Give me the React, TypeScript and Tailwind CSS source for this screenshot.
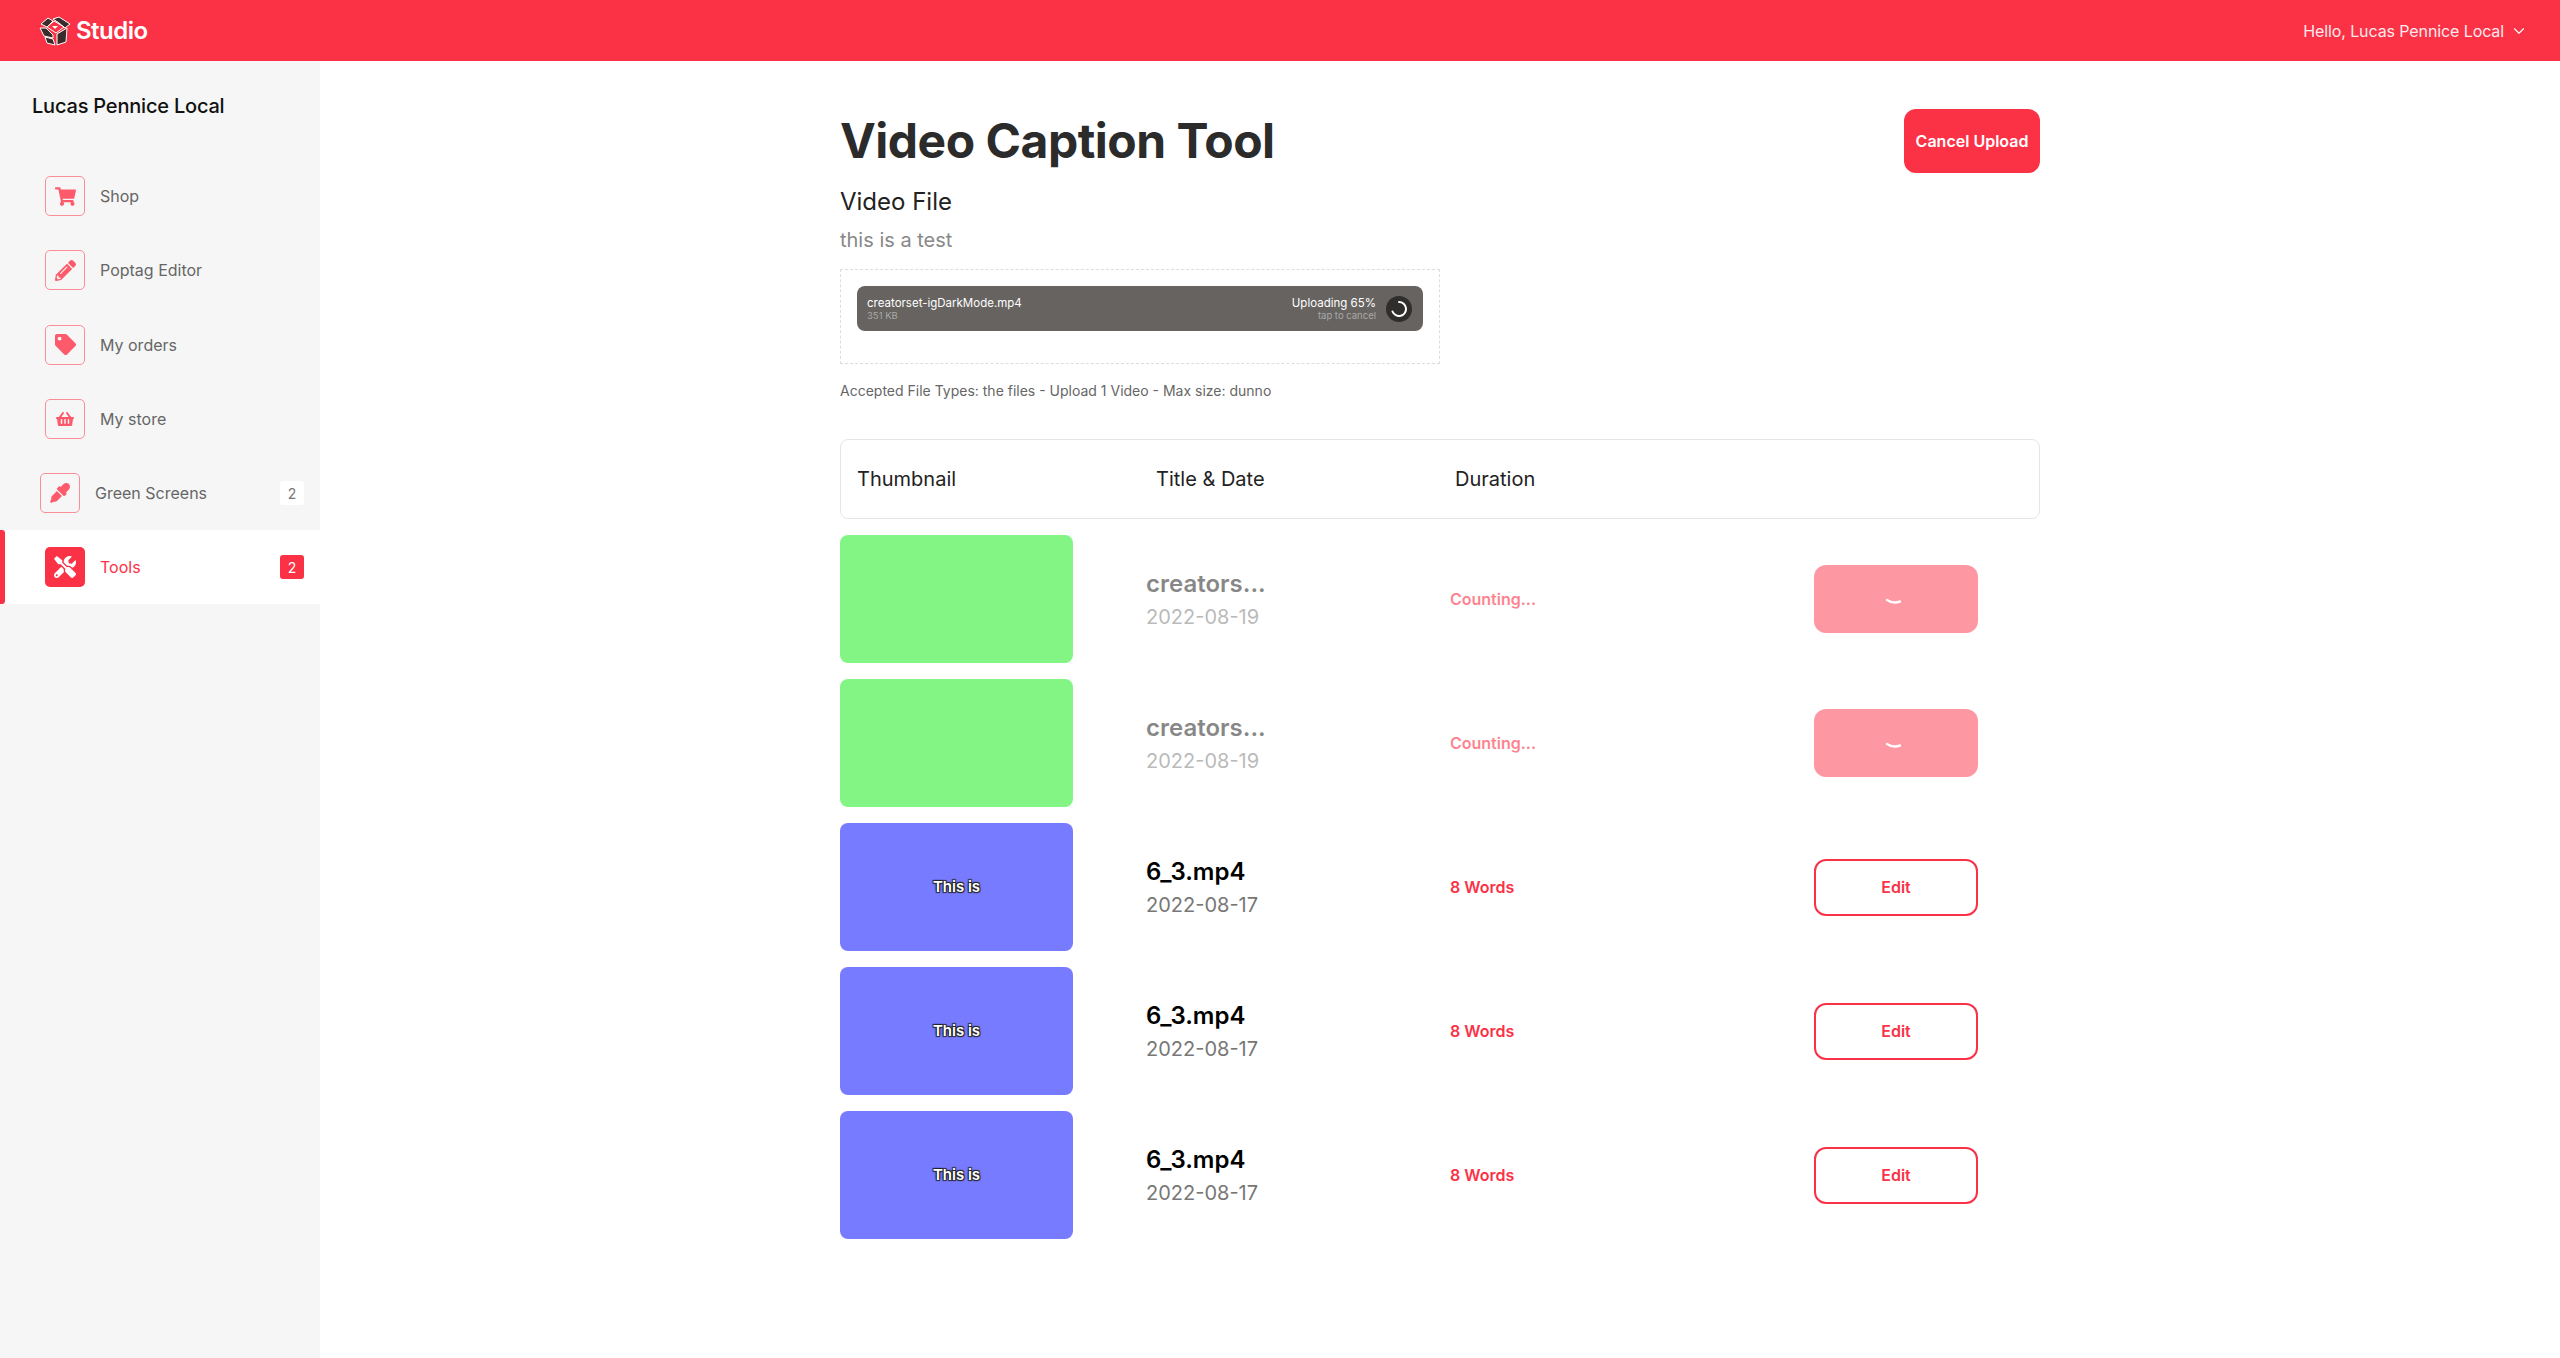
import { ChevronDown } from "lucide-react";
import { FaShoppingCart, FaPencilAlt, FaTag, FaShoppingBasket, FaEyeDropper, FaTools } from "react-icons/fa";

const nav = [
  { label: "Shop", Icon: FaShoppingCart, size: 21 },
  { label: "Poptag Editor", Icon: FaPencilAlt, size: 21 },
  { label: "My orders", Icon: FaTag, size: 21 },
  { label: "My store", Icon: FaShoppingBasket, size: 18 },
];

function Logo() {
  return (
    <svg width="32" height="30" viewBox="0 0 32 30" className="shrink-0">
      <path d="M2 8 L9 2 L14 5 L8 11 Z" fill="#3a2b2d" stroke="#fff" strokeWidth="1" />
      <path d="M14 3 L20 1 L31 8 L26 12 L20 7 Z" fill="#3a2b2d" stroke="#fff" strokeWidth="1" />
      <path d="M8 11 L15 5 L25 11 L17 17 Z" fill="#fb3146" stroke="#fff" strokeWidth="1" />
      <path d="M1 12 L7 12 L14 19 L14 22 L5 20 Z" fill="#3a2b2d" stroke="#fff" strokeWidth="1" />
      <path d="M6 21 L14 23 L16 29 L8 27 Z" fill="#3a2b2d" stroke="#fff" strokeWidth="1" />
      <path d="M18 18 L28 12 L27 26 L18 29 Z" fill="#3a2b2d" stroke="#fff" strokeWidth="1" />
      <path d="M13 10 L19 10 L16 13 Z" fill="#fff" />
    </svg>
  );
}

function Sidebar() {
  return (
    <aside className="w-[320px] shrink-0 bg-[#f6f6f6] min-h-[1297px]">
      <div className="pl-[32px] pt-[33px] h-[98px] text-[20px] leading-[24px] font-medium text-[#111] tracking-[-0.2px]">Lucas Pennice Local</div>
      <nav>
        {nav.map(({ label, Icon, size }) => (
          <div key={label} className="h-[74.3px] flex items-center pl-[45px]">
            <div className="w-[40px] h-[40px] rounded-[5px] border border-[#fb8d98] flex items-center justify-center text-[#fd5a6b]">
              <Icon size={size} />
            </div>
            <span className="ml-[15px] text-[16px] text-[#666]">{label}</span>
          </div>
        ))}
        <div className="h-[74.3px] flex items-center pl-[40px] pr-[16px]">
          <div className="w-[40px] h-[40px] rounded-[5px] border border-[#fb8d98] flex items-center justify-center text-[#fd5a6b]">
            <FaEyeDropper size={20} />
          </div>
          <span className="ml-[15px] text-[16px] text-[#666] flex-1">Green Screens</span>
          <span className="w-[24px] h-[24px] rounded-[3px] bg-white text-[#777] text-[14px] flex items-center justify-center">2</span>
        </div>
        <div className="relative h-[74px] bg-white flex items-center pl-[45px] pr-[16px]">
          <span className="absolute left-0 top-0 bottom-0 w-[5px] bg-[#fb3146] rounded-r-[3px]" />
          <div className="w-[40px] h-[40px] rounded-[5px] bg-[#fb3146] flex items-center justify-center text-white">
            <FaTools size={22} />
          </div>
          <span className="ml-[15px] text-[16px] text-[#fb3146] flex-1">Tools</span>
          <span className="w-[24px] h-[24px] rounded-[3px] bg-[#fb3146] text-white text-[14px] flex items-center justify-center">2</span>
        </div>
      </nav>
    </aside>
  );
}

function Spinner() {
  return (
    <svg width="20" height="20" viewBox="0 0 20 20">
      <path d="M3 6 Q9 10 16 7.5" transform="translate(0 1)" fill="none" stroke="#fff" strokeWidth="2.4" strokeLinecap="round" />
    </svg>
  );
}

function Row({ green, title, date, status }: { green: boolean; title: string; date: string; status: string }) {
  return (
    <div className="flex items-center h-[128px] mb-[16px]">
      <div className={`w-[233px] h-[128px] rounded-[8px] flex items-center justify-center shrink-0 ${green ? "bg-[#82f584]" : "bg-[#777bff]"}`}>
        {!green && (
          <span className="text-white text-[15px] font-semibold [text-shadow:1px_1px_1px_#222,-1px_1px_1px_#222,1px_-1px_1px_#222,-1px_-1px_1px_#222]">This is</span>
        )}
      </div>
      <div className={`ml-[73px] w-[304px] shrink-0 ${green ? "opacity-50" : ""}`}>
        <div className={`text-[24px] leading-[32px] font-semibold ${green ? "text-[#111]" : "text-black"}`}>{title}</div>
        <div className="mt-[3px] text-[20px] leading-[28px] text-[#777]">{date}</div>
      </div>
      <div className={`w-[364px] shrink-0 text-[16px] font-semibold text-[#fb3146] ${green ? "opacity-60" : ""}`}>{status}</div>
      {green ? (
        <div className="w-[164px] h-[68px] rounded-[12px] bg-[#fd98a3] flex items-center justify-center pt-[8px] pr-[4px] shrink-0">
          <Spinner />
        </div>
      ) : (
        <div className="w-[164px] h-[57px] rounded-[12px] border-2 border-[#fb3146] bg-white flex items-center justify-center text-[16px] font-semibold text-[#fb3146] shrink-0">Edit</div>
      )}
    </div>
  );
}

export default function App() {
  return (
    <div className="min-h-[1358px] bg-white font-['Inter','Liberation_Sans',sans-serif]">
      <header className="h-[61px] bg-[#fb3146] flex items-center justify-between pl-[39px] pr-[32px]">
        <div className="flex items-center gap-[5px]">
          <Logo />
          <span className="text-white text-[24px] font-semibold tracking-[-0.5px]">Studio</span>
        </div>
        <div className="flex items-center gap-[6px] text-white text-[16px]">
          <span className="tracking-[-0.1px] opacity-90">Hello, Lucas Pennice Local</span>
          <ChevronDown size={18} strokeWidth={1.5} />
        </div>
      </header>
      <div className="flex">
        <Sidebar />
        <main className="flex-1 flex justify-center">
          <div className="w-[1200px]">
            <div className="flex justify-between items-start pt-[48px]">
              <h1 className="text-[48px] leading-[64px] font-bold text-[#2b2b2b] tracking-[-0.5px]">Video Caption Tool</h1>
              <button className="w-[136px] h-[64px] rounded-[12px] bg-[#fb3146] text-white text-[16px] font-semibold">Cancel Upload</button>
            </div>
            <h2 className="mt-[13px] text-[24px] leading-[32px] text-[#222]">Video File</h2>
            <p className="mt-[8px] text-[20px] leading-[28px] text-[#888]">this is a test</p>
            <div className="mt-[15px] w-[600px] h-[95px] border border-dashed border-[#ddd] pt-[16px] px-[16px]">
              <div className="h-[45px] rounded-[8px] bg-[#666360] flex items-center pl-[10px] pr-[11px]">
                <div className="flex-1 leading-none">
                  <div className="text-white text-[11.5px] leading-[14px]">creatorset-igDarkMode.mp4</div>
                  <div className="text-[#aaa] text-[9.5px] leading-[12px]">351 KB</div>
                </div>
                <div className="text-right">
                  <div className="text-white text-[11.5px] leading-[14px]">Uploading 65%</div>
                  <div className="text-[#aaa] text-[9.5px] leading-[12px]">tap to cancel</div>
                </div>
                <div className="ml-[10px] w-[26px] h-[26px] rounded-full bg-[#302e2d] flex items-center justify-center">
                  <svg width="18" height="18" viewBox="0 0 18 18">
                    <path d="M9 2 A7 7 0 1 1 2.5 11.5" fill="none" stroke="#fff" strokeWidth="2" strokeLinecap="round" />
                  </svg>
                </div>
              </div>
            </div>
            <p className="mt-[17px] text-[14px] leading-[20px] text-[#666]">Accepted File Types: the files - Upload 1 Video - Max size: dunno</p>
            <div className="mt-[38px] h-[80px] border border-[#e5e5e5] rounded-[8px] flex items-center text-[20px] text-[#222] pl-[16px]">
              <span className="w-[299px]">Thumbnail</span>
              <span className="w-[299px]">Title &amp; Date</span>
              <span>Duration</span>
            </div>
            <div className="mt-[16px]">
              <Row green title="creators..." date="2022-08-19" status="Counting..." />
              <Row green title="creators..." date="2022-08-19" status="Counting..." />
              <Row green={false} title="6_3.mp4" date="2022-08-17" status="8 Words" />
              <Row green={false} title="6_3.mp4" date="2022-08-17" status="8 Words" />
              <Row green={false} title="6_3.mp4" date="2022-08-17" status="8 Words" />
            </div>
          </div>
        </main>
      </div>
    </div>
  );
}
